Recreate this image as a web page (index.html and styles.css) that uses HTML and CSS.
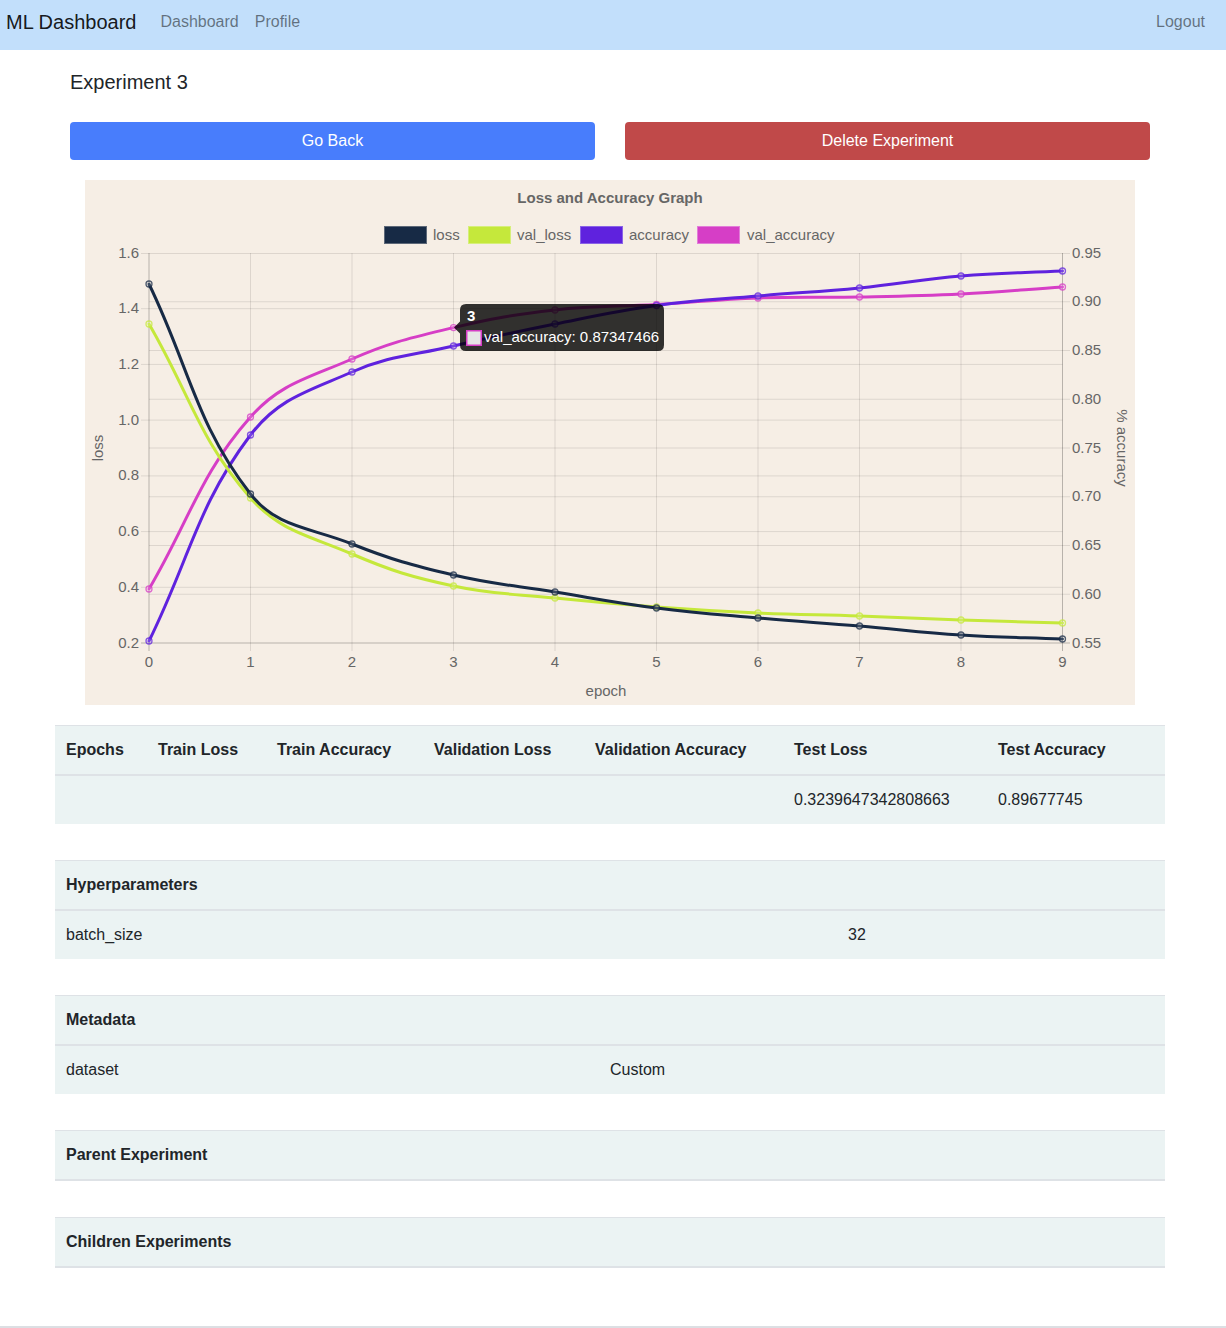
FILE: index.html
```html
<!DOCTYPE html>
<html lang="en">
<head>
<meta charset="utf-8">
<title>ML Dashboard - Experiment 3</title>
<link rel="stylesheet" href="styles.css">
</head>
<body>
<nav class="navbar">
  <a class="brand" href="#">ML Dashboard</a>
  <div class="nav-links">
    <a class="nav-link" href="#">Dashboard</a>
    <a class="nav-link" href="#">Profile</a>
  </div>
  <div class="nav-right">
    <a class="nav-link" href="#">Logout</a>
  </div>
</nav>

<main class="container">
  <h5 class="title">Experiment 3</h5>
  <div class="actions">
    <button class="btn btn-primary">Go Back</button>
    <button class="btn btn-danger">Delete Experiment</button>
  </div>

  <div class="chart">
    <svg class="chart-svg" width="1050" height="525" viewBox="85 180 1050 525" xmlns="http://www.w3.org/2000/svg">
      <text class="c-title" x="610" y="203" text-anchor="middle">Loss and Accuracy Graph</text>

      <g class="legend">
        <rect x="384.5" y="226.5" width="42" height="17" fill="#172a45" stroke="#5d6878"/>
        <text x="433" y="240">loss</text>
        <rect x="468.5" y="226.5" width="42" height="17" fill="#c5e83b" stroke="#d6ef7a"/>
        <text x="517" y="240">val_loss</text>
        <rect x="580.5" y="226.5" width="42" height="17" fill="#5f22de" stroke="#8a63e6"/>
        <text x="629" y="240">accuracy</text>
        <rect x="697.5" y="226.5" width="42" height="17" fill="#d63ec6" stroke="#e27dd8"/>
        <text x="747" y="240">val_accuracy</text>
      </g>

      <g class="grid">
        <line x1="250.5" y1="253" x2="250.5" y2="651"/>
        <line x1="352" y1="253" x2="352" y2="651"/>
        <line x1="453.5" y1="253" x2="453.5" y2="651"/>
        <line x1="555" y1="253" x2="555" y2="651"/>
        <line x1="656.5" y1="253" x2="656.5" y2="651"/>
        <line x1="758" y1="253" x2="758" y2="651"/>
        <line x1="859.5" y1="253" x2="859.5" y2="651"/>
        <line x1="961" y1="253" x2="961" y2="651"/>

        <line x1="141" y1="253.5" x2="1062.5" y2="253.5"/>
        <line x1="141" y1="308.7" x2="1062.5" y2="308.7"/>
        <line x1="141" y1="364.4" x2="1062.5" y2="364.4"/>
        <line x1="141" y1="420.1" x2="1062.5" y2="420.1"/>
        <line x1="141" y1="475.9" x2="1062.5" y2="475.9"/>
        <line x1="141" y1="531.6" x2="1062.5" y2="531.6"/>
        <line x1="141" y1="587.3" x2="1062.5" y2="587.3"/>

        <line x1="149" y1="301.75" x2="1070" y2="301.75"/>
        <line x1="149" y1="350.5" x2="1070" y2="350.5"/>
        <line x1="149" y1="399.25" x2="1070" y2="399.25"/>
        <line x1="149" y1="448" x2="1070" y2="448"/>
        <line x1="149" y1="496.75" x2="1070" y2="496.75"/>
        <line x1="149" y1="545.5" x2="1070" y2="545.5"/>
        <line x1="149" y1="594.25" x2="1070" y2="594.25"/>
        <line x1="1062.5" y1="253.5" x2="1070" y2="253.5"/>
      </g>

      <g class="axis">
        <line x1="149" y1="253" x2="149" y2="651"/>
        <line x1="1062.5" y1="253" x2="1062.5" y2="651"/>
        <line x1="141" y1="643" x2="1070" y2="643"/>
      </g>

      <g class="ticks ticks-left" text-anchor="end">
        <text x="139" y="257.5">1.6</text>
        <text x="139" y="313.2">1.4</text>
        <text x="139" y="368.9">1.2</text>
        <text x="139" y="424.6">1.0</text>
        <text x="139" y="480.4">0.8</text>
        <text x="139" y="536.1">0.6</text>
        <text x="139" y="591.8">0.4</text>
        <text x="139" y="647.5">0.2</text>
      </g>
      <g class="ticks ticks-right">
        <text x="1072" y="257.5">0.95</text>
        <text x="1072" y="306.25">0.90</text>
        <text x="1072" y="355">0.85</text>
        <text x="1072" y="403.75">0.80</text>
        <text x="1072" y="452.5">0.75</text>
        <text x="1072" y="501.25">0.70</text>
        <text x="1072" y="550">0.65</text>
        <text x="1072" y="598.75">0.60</text>
        <text x="1072" y="647.5">0.55</text>
      </g>
      <g class="ticks ticks-x" text-anchor="middle">
        <text x="149" y="667">0</text>
        <text x="250.5" y="667">1</text>
        <text x="352" y="667">2</text>
        <text x="453.5" y="667">3</text>
        <text x="555" y="667">4</text>
        <text x="656.5" y="667">5</text>
        <text x="758" y="667">6</text>
        <text x="859.5" y="667">7</text>
        <text x="961" y="667">8</text>
        <text x="1062.5" y="667">9</text>
      </g>

      <text class="axis-title" x="606" y="696" text-anchor="middle">epoch</text>
      <text class="axis-title" transform="translate(103 448) rotate(-90)" text-anchor="middle">loss</text>
      <text class="axis-title" transform="translate(1117 448) rotate(90)" text-anchor="middle">% accuracy</text>

      <g id="series">
        <g class="series" data-color="#d63ec6">
          <path id="line-val_accuracy" class="line" stroke="#d63ec6" d="M149 589 L250.5 417 L352 359 L453.5 327.6 L555 310 L656.5 304.5 L758 298 L859.5 297 L961 294 L1062.5 287"/>
        </g>
        <g class="series" data-color="#5f22de">
          <path id="line-accuracy" class="line" stroke="#5f22de" d="M149 641 L250.5 435 L352 372 L453.5 346 L555 324 L656.5 305.5 L758 296 L859.5 288 L961 276 L1062.5 271"/>
        </g>
        <g class="series" data-color="#c5e83b">
          <path id="line-val_loss" class="line" stroke="#c5e83b" d="M149 324 L250.5 498 L352 554 L453.5 586 L555 598 L656.5 607 L758 613 L859.5 616 L961 620 L1062.5 623"/>
        </g>
        <g class="series" data-color="#172a45">
          <path id="line-loss" class="line" stroke="#172a45" d="M149 284 L250.5 494 L352 544 L453.5 575 L555 592 L656.5 608 L758 618 L859.5 626 L961 635 L1062.5 639"/>
        </g>
      </g>

      <g class="tooltip">
        <path class="tip-bg" d="M466 304 H658 Q664 304 664 310 V345 Q664 351 658 351 H466 Q460 351 460 345 V333.5 L454 327.6 L460 321.5 V310 Q460 304 466 304 Z"/>
        <text class="tip-title" x="467" y="321">3</text>
        <rect x="466.75" y="330.75" width="14.5" height="14.5" fill="#e6e6e6" stroke="#d63ec6" stroke-width="1.5"/>
        <text class="tip-body" x="484" y="342">val_accuracy: 0.87347466</text>
      </g>
    </svg>
  </div>

  <table class="table t-results">
    <colgroup><col><col><col><col><col><col><col></colgroup>
    <thead>
      <tr>
        <th>Epochs</th>
        <th>Train Loss</th>
        <th>Train Accuracy</th>
        <th>Validation Loss</th>
        <th>Validation Accuracy</th>
        <th>Test Loss</th>
        <th>Test Accuracy</th>
      </tr>
    </thead>
    <tbody>
      <tr>
        <td></td>
        <td></td>
        <td></td>
        <td></td>
        <td></td>
        <td>0.3239647342808663</td>
        <td>0.89677745</td>
      </tr>
    </tbody>
  </table>

  <table class="table t-hyper">
    <colgroup><col><col></colgroup>
    <thead>
      <tr><th colspan="2">Hyperparameters</th></tr>
    </thead>
    <tbody>
      <tr><td>batch_size</td><td>32</td></tr>
    </tbody>
  </table>

  <table class="table t-meta">
    <colgroup><col><col></colgroup>
    <thead>
      <tr><th colspan="2">Metadata</th></tr>
    </thead>
    <tbody>
      <tr><td>dataset</td><td>Custom</td></tr>
    </tbody>
  </table>

  <table class="table">
    <thead>
      <tr><th>Parent Experiment</th></tr>
    </thead>
  </table>

  <table class="table">
    <thead>
      <tr><th>Children Experiments</th></tr>
    </thead>
  </table>
</main>

<footer class="footer"></footer>
<script src="script.js"></script>
</body>
</html>
```

FILE: styles.css
```css
* {
  box-sizing: border-box;
}

body {
  margin: 0;
  font-family: "Liberation Sans", Arial, Helvetica, sans-serif;
  font-size: 16px;
  line-height: 1.5;
  color: #212529;
  background: #fff;
}

/* Navbar */
.navbar {
  height: 50px;
  background: #c2dffb;
  display: flex;
  align-items: flex-start;
  padding: 7px 13px 0 6px;
}

.brand {
  font-size: 20px;
  line-height: 30px;
  color: rgba(0, 0, 0, 0.9);
  text-decoration: none;
  margin-right: 16px;
}

.nav-links {
  display: flex;
  padding-top: 3px;
}

.nav-right {
  margin-left: auto;
  padding-top: 3px;
}

.nav-link {
  display: block;
  padding: 0 8px;
  line-height: 24px;
  color: rgba(0, 0, 0, 0.5);
  text-decoration: none;
}

/* Main */
.container {
  width: 1110px;
  margin-left: 55px;
  padding-bottom: 22px;
}

.title {
  font-size: 20px;
  font-weight: 400;
  line-height: 24px;
  margin: 20px 0 0;
  padding: 0 15px;
}

.actions {
  display: flex;
  gap: 30px;
  padding: 0 15px;
  margin-top: 28px;
}

.btn {
  flex: 1;
  height: 38px;
  border: 0;
  border-radius: 4px;
  color: #fff;
  font: inherit;
  line-height: 24px;
  padding: 7px 12px;
  text-align: center;
}

.btn-primary {
  background: #487dfc;
}

.btn-danger {
  background: #c04949;
}

/* Chart */
.chart {
  margin: 20px 30px;
  height: 525px;
  background: #f6eee5;
}

.chart-svg {
  display: block;
  font-family: "Liberation Sans", Arial, Helvetica, sans-serif;
  font-size: 15px;
}

.c-title {
  font-weight: 700;
  fill: #666;
}

.legend text,
.ticks text,
.axis-title {
  fill: #666;
}

.grid line {
  stroke: rgba(0, 0, 0, 0.1);
  stroke-width: 1;
}

.axis line {
  stroke: rgba(0, 0, 0, 0.25);
  stroke-width: 1;
}

.line {
  fill: none;
  stroke-width: 3;
  stroke-linejoin: round;
  stroke-linecap: round;
}

.point {
  fill: rgba(255, 255, 255, 0.15);
  stroke-width: 1.3;
  stroke-opacity: 0.75;
}

.tip-bg {
  fill: rgba(0, 0, 0, 0.8);
}

.tip-title {
  fill: #fff;
  font-weight: 700;
}

.tip-body {
  fill: #fff;
}

/* Tables */
.table {
  width: 100%;
  border-collapse: collapse;
  table-layout: fixed;
  background: #ebf3f3;
  margin-bottom: 36px;
}

.table th,
.table td {
  padding: 12px 12px 12px 11px;
  text-align: left;
  vertical-align: top;
  border-top: 1px solid #dee2e6;
  line-height: 24px;
  font-size: 16px;
}

.table th {
  font-weight: 700;
}

.table thead th {
  border-bottom: 2px solid #dee2e6;
}

.t-results col:nth-child(1) { width: 92px; }
.t-results col:nth-child(2) { width: 119px; }
.t-results col:nth-child(3) { width: 157px; }
.t-results col:nth-child(4) { width: 161px; }
.t-results col:nth-child(5) { width: 199px; }
.t-results col:nth-child(6) { width: 204px; }
.t-results col:nth-child(7) { width: 178px; }

.t-hyper col:nth-child(1) { width: 782px; }
.t-hyper col:nth-child(2) { width: 328px; }

.t-meta col:nth-child(1) { width: 544px; }
.t-meta col:nth-child(2) { width: 566px; }

/* Footer */
.footer {
  border-top: 2px solid #dcdfe3;
}
```

FILE: script.js
```js
(function () {
  var NS = 'http://www.w3.org/2000/svg';
  var xs = [149, 250.5, 352, 453.5, 555, 656.5, 758, 859.5, 961, 1062.5];
  var data = {
    'line-val_accuracy': [589, 417, 359, 327.6, 310, 304.5, 298, 297, 294, 287],
    'line-accuracy': [641, 435, 372, 346, 324, 305.5, 296, 288, 276, 271],
    'line-val_loss': [324, 498, 554, 586, 598, 607, 613, 616, 620, 623],
    'line-loss': [284, 494, 544, 575, 592, 608, 618, 626, 635, 639]
  };
  var TOP = 253, BOTTOM = 643;

  function clamp(v) { return Math.max(TOP, Math.min(BOTTOM, v)); }
  function r(v) { return Math.round(v * 100) / 100; }

  function buildPath(ys) {
    var pts = xs.map(function (x, i) { return { x: x, y: ys[i] }; });
    var n = pts.length, t = 0.4, cps = [];
    for (var i = 0; i < n; i++) {
      var p = pts[i - 1] || pts[i], c = pts[i], nx = pts[i + 1] || pts[i];
      var d01 = Math.sqrt(Math.pow(c.x - p.x, 2) + Math.pow(c.y - p.y, 2));
      var d12 = Math.sqrt(Math.pow(nx.x - c.x, 2) + Math.pow(nx.y - c.y, 2));
      var s01 = d01 / (d01 + d12), s12 = d12 / (d01 + d12);
      if (isNaN(s01)) s01 = 0;
      if (isNaN(s12)) s12 = 0;
      var fa = t * s01, fb = t * s12;
      cps.push({
        px: c.x - fa * (nx.x - p.x), py: clamp(c.y - fa * (nx.y - p.y)),
        nx: c.x + fb * (nx.x - p.x), ny: clamp(c.y + fb * (nx.y - p.y))
      });
    }
    var d = 'M' + pts[0].x + ' ' + pts[0].y;
    for (i = 1; i < n; i++) {
      d += ' C' + r(cps[i - 1].nx) + ' ' + r(cps[i - 1].ny) + ' ' +
        r(cps[i].px) + ' ' + r(cps[i].py) + ' ' + pts[i].x + ' ' + pts[i].y;
    }
    return d;
  }

  Object.keys(data).forEach(function (id) {
    var path = document.getElementById(id);
    if (!path) return;
    path.setAttribute('d', buildPath(data[id]));
    var g = path.parentNode;
    var color = g.getAttribute('data-color');
    data[id].forEach(function (y, i) {
      var c = document.createElementNS(NS, 'circle');
      c.setAttribute('class', 'point');
      c.setAttribute('cx', xs[i]);
      c.setAttribute('cy', y);
      c.setAttribute('r', 3);
      c.setAttribute('stroke', color);
      g.appendChild(c);
    });
  });
})();
```
